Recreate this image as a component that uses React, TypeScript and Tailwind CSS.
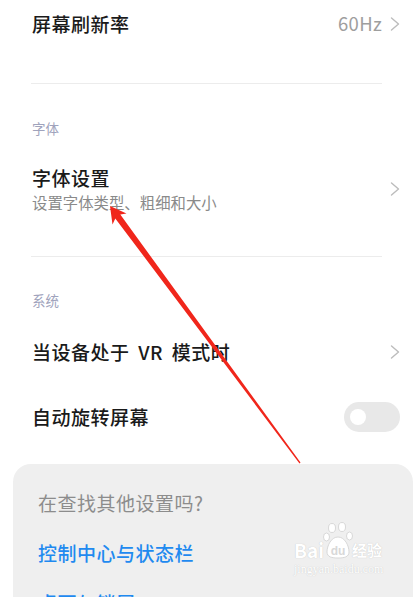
import React from "react"

const font = "font-['Noto_Sans_CJK_SC','Noto_Sans',sans-serif]"

function Chevron() {
  return (
    <svg width="10" height="14" viewBox="0 0 10 14" fill="none">
      <path d="M1.5 1 L8.5 7 L1.5 13" stroke="#bcbcbc" strokeWidth="1.4" strokeLinecap="round" strokeLinejoin="round" />
    </svg>
  )
}

function SectionHeader({ label }: { label: string }) {
  return <div className="h-[18px] px-[32px] text-[13.5px] leading-[18px] text-[#a0a3bc]">{label}</div>
}

function Row({ title, right }: { title: string; right?: React.ReactNode }) {
  return (
    <div className="flex h-[48px] items-center justify-between pl-[32px] pr-[13px]">
      <span className="text-[19px] font-medium tracking-[0.5px] text-[#1a1a1a] [word-spacing:4px]">{title}</span>
      {right}
    </div>
  )
}

function Toggle() {
  return (
    <div className="flex h-[30px] w-[56px] items-center rounded-full bg-[#e8e8e8] pl-[6px]">
      <div className="h-[16px] w-[16px] rounded-full bg-white" />
    </div>
  )
}

function Arrow() {
  // red annotation arrow pointing at the font settings subtitle
  return (
    <svg className="pointer-events-none absolute left-0 top-0" width="413" height="597" viewBox="0 0 413 597">
      <polygon
        points="110,206 112.5,224.5 115.3,218.4 299.5,463.4 300.5,462.6 120.3,214.6 126.5,213.5"
        fill="#f0261b"
      />
    </svg>
  )
}

function Watermark() {
  return (
    <div className="pointer-events-none absolute left-[294px] top-[520px] flex w-[100px] flex-col">
      <div className="flex items-end">
        <span className="text-[19px] font-bold leading-[20px] text-white [text-shadow:0_0_1px_#bdbdbd]">Bai</span>
        <svg width="30" height="40" viewBox="0 0 30 40" className="-mx-[1px]">
          <g fill="#fff" stroke="#cfcfcf" strokeWidth="0.8">
            <ellipse cx="9" cy="8" rx="3.5" ry="4.5" />
            <ellipse cx="19" cy="7" rx="3.5" ry="4.5" />
            <ellipse cx="3.5" cy="17" rx="3" ry="4" />
            <ellipse cx="26.5" cy="16" rx="3" ry="4" />
            <path d="M15 17 C8 17 4 26 4 32 C4 37 9 38 15 38 C21 38 26 37 26 32 C26 26 22 17 15 17 Z" />
          </g>
          <text x="15" y="35" textAnchor="middle" fontSize="12" fontWeight="700" fill="#d8d8d8" fontFamily="Liberation Sans, sans-serif">du</text>
        </svg>
        <span className="text-[15px] font-bold leading-[20px] text-white [text-shadow:0_0_1px_#bdbdbd]">经验</span>
      </div>
      <span className="mt-[2px] font-['Liberation_Serif',serif] text-[12px] leading-[14px] text-white [text-shadow:0_0_1px_#bdbdbd]">
        jingyan.baidu.com
      </span>
    </div>
  )
}

export default function App() {
  return (
    <div className={`relative h-[597px] w-[413px] overflow-hidden bg-white ${font}`}>
      <div className="flex flex-col">
        <Row
          title="屏幕刷新率"
          right={
            <div className="flex items-center gap-[8px]">
              <span className="text-[18.5px] tracking-[0.3px] text-[#9e9e9e]">60Hz</span>
              <Chevron />
            </div>
          }
        />
        <div className="mx-[31px] mt-[35px] h-px bg-[#ececec]" />

        <div className="mt-[35px]">
          <SectionHeader label="字体" />
        </div>
        <div className="mt-[29px] flex items-center justify-between pl-[32px] pr-[13px]">
          <div className="flex flex-col">
            <span className="text-[19px] font-medium leading-[24px] tracking-[0.5px] text-[#1a1a1a]">字体设置</span>
            <span className="mt-[2px] text-[15.4px] leading-[20px] text-[#8a8a8a]">设置字体类型、粗细和大小</span>
          </div>
          <Chevron />
        </div>
        <div className="mx-[31px] mt-[44px] h-px bg-[#ececec]" />

        <div className="mt-[34px]">
          <SectionHeader label="系统" />
        </div>
        <div className="mt-[19px]">
          <Row title="当设备处于 VR 模式时" right={<Chevron />} />
        </div>
        <div className="mt-[17px]">
          <Row title="自动旋转屏幕" right={<Toggle />} />
        </div>

        <div className="ml-[13px] mt-[23px] flex h-[200px] flex-col gap-[26px] rounded-t-[18px] bg-[#efefef] pl-[25px] pt-[27px]">
          <span className="text-[19px] leading-[24px] tracking-[0.5px] text-[#8c8c8c]">在查找其他设置吗?</span>
          <span className="text-[19px] font-medium leading-[24px] tracking-[0.5px] text-[#1f8af0]">控制中心与状态栏</span>
          <span className="text-[19px] font-medium leading-[24px] tracking-[0.5px] text-[#1f8af0]">桌面与锁屏</span>
        </div>
      </div>
      <Arrow />
      <Watermark />
    </div>
  )
}
